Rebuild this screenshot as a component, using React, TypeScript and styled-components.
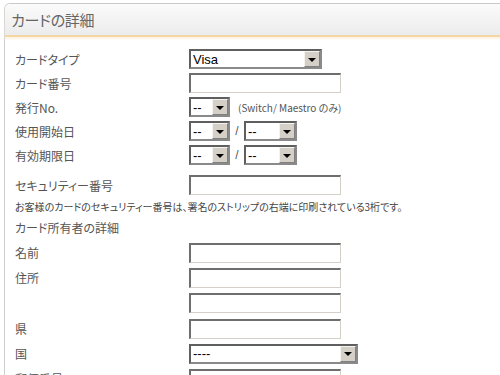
import React from "react";
import styled, { createGlobalStyle } from "styled-components";

const GlobalStyle = createGlobalStyle`
  html, body { margin: 0; padding: 0; background: #ffffff; }
  body {
    font-family: "Noto Sans CJK JP", "Liberation Sans", sans-serif;
    font-feature-settings: "palt";
    overflow: hidden;
  }
`;

const Page = styled.div`
  width: 500px;
  height: 375px;
  overflow: hidden;
  padding-top: 3px;
  box-sizing: border-box;
`;

const Panel = styled.section`
  margin-left: 4px;
  border-left: 1px solid #cfcfcf;
  border-top: 1px solid #c9c9c9;
  border-top-left-radius: 6px;
  height: 400px;
`;

const Header = styled.header`
  height: 31px;
  display: flex;
  align-items: center;
  padding-left: 6px;
  background: linear-gradient(#fbfbfb, #ececec);
  border-top-left-radius: 5px;
  border-bottom: 2px solid #f4d7a4;
  box-shadow: 0 2px 2px #fdf3e1;
`;

const Title = styled.h2`
  margin: 0;
  font-size: 15px;
  font-weight: normal;
  color: #666666;
  letter-spacing: -0.3px;
`;

const Body = styled.div`
  padding: 10px 0 0 10px;
  display: flex;
  flex-direction: column;
`;

const Row = styled.div<{ $h?: number; $mt?: number }>`
  display: flex;
  align-items: center;
  height: ${(p) => p.$h ?? 24}px;
  margin-top: ${(p) => p.$mt ?? 0}px;
`;

const Label = styled.label`
  width: 174px;
  flex: none;
  font-size: 12px;
  color: #555555;
  white-space: nowrap;
`;

const Note = styled.p`
  margin: 0;
  height: 19px;
  display: flex;
  align-items: center;
  font-size: 10px;
  color: #444444;
  white-space: nowrap;
`;

const SubHeading = styled.h3`
  margin: 0;
  height: 22px;
  display: flex;
  align-items: center;
  font-size: 12px;
  font-weight: normal;
  color: #555555;
`;

const TextInput = styled.div`
  width: 152px;
  height: 20px;
  box-sizing: border-box;
  border-style: solid;
  border-width: 2px 1px 1px 2px;
  border-color: #6e6e6e #d4d0c8 #d4d0c8 #6e6e6e;
  background: #ffffff;
`;

const SelectBox = styled.div<{ $w: number }>`
  width: ${(p) => p.$w}px;
  height: 20px;
  box-sizing: border-box;
  display: flex;
  border-style: solid;
  border-width: 2px;
  border-color: #5f5f5f #8a8a8a #8a8a8a #5f5f5f;
  background: #ffffff;
`;

const SelectValue = styled.span`
  flex: 1;
  display: flex;
  align-items: center;
  padding-left: 2px;
  font-family: "Liberation Sans", Arial, sans-serif;
  font-size: 13px;
  color: #000000;
  overflow: hidden;
`;

const ArrowButton = styled.span`
  width: 16px;
  flex: none;
  box-sizing: border-box;
  display: flex;
  align-items: center;
  justify-content: center;
  background: #d4d0c8;
  border-style: solid;
  border-width: 1px;
  border-color: #f4f3ee #808080 #808080 #f4f3ee;
`;

const Triangle = styled.span`
  width: 0;
  height: 0;
  border-left: 4px solid transparent;
  border-right: 4px solid transparent;
  border-top: 4px solid #000000;
  margin-top: 1px;
`;

const Slash = styled.span`
  width: 14px;
  text-align: center;
  font-family: "Liberation Sans", Arial, sans-serif;
  font-size: 12px;
  color: #555555;
`;

const Hint = styled.span`
  margin-left: 8px;
  font-size: 10px;
  color: #555555;
  white-space: nowrap;
`;

const Select = ({ w, value }: { w: number; value: string }) => (
  <SelectBox $w={w}>
    <SelectValue>{value}</SelectValue>
    <ArrowButton>
      <Triangle />
    </ArrowButton>
  </SelectBox>
);

export default function App() {
  return (
    <>
      <GlobalStyle />
      <Page>
        <Panel>
          <Header>
            <Title>カードの詳細</Title>
          </Header>
          <Body>
            <Row>
              <Label>カードタイプ</Label>
              <Select w={133} value="Visa" />
            </Row>
            <Row>
              <Label>カード番号</Label>
              <TextInput />
            </Row>
            <Row>
              <Label>発行No.</Label>
              <Select w={41} value="--" />
              <Hint>(Switch/ Maestro のみ)</Hint>
            </Row>
            <Row>
              <Label>使用開始日</Label>
              <Select w={41} value="--" />
              <Slash>/</Slash>
              <Select w={53} value="--" />
            </Row>
            <Row>
              <Label>有効期限日</Label>
              <Select w={41} value="--" />
              <Slash>/</Slash>
              <Select w={53} value="--" />
            </Row>
            <Row $mt={6}>
              <Label>セキュリティー番号</Label>
              <TextInput />
            </Row>
            <Note>
              お客様のカードのセキュリティー番号は、署名のストリップの右端に印刷されている3桁です。
            </Note>
            <SubHeading>カード所有者の詳細</SubHeading>
            <Row $h={25} $mt={2}>
              <Label>名前</Label>
              <TextInput />
            </Row>
            <Row $h={25}>
              <Label>住所</Label>
              <TextInput />
            </Row>
            <Row $h={26}>
              <Label />
              <TextInput />
            </Row>
            <Row $h={25}>
              <Label>県</Label>
              <TextInput />
            </Row>
            <Row $h={25}>
              <Label>国</Label>
              <Select w={169} value="----" />
            </Row>
            <Row $h={25}>
              <Label>郵便番号</Label>
              <TextInput />
            </Row>
          </Body>
        </Panel>
      </Page>
    </>
  );
}
